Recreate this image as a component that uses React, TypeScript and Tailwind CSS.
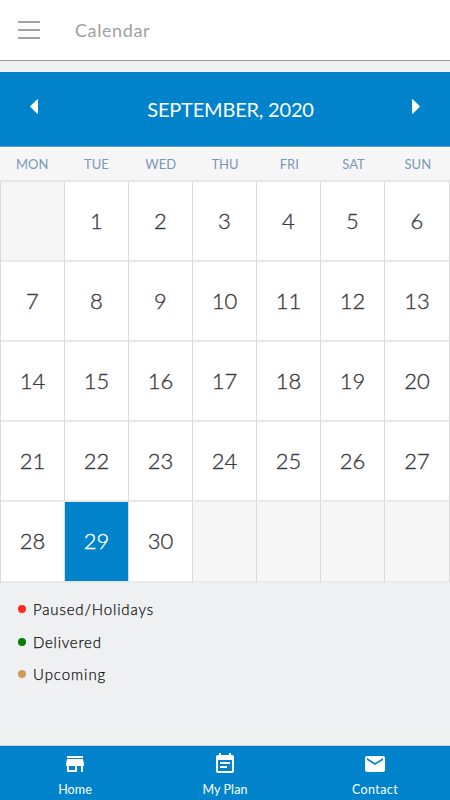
import { MdEmail, MdEventNote, MdStoreMallDirectory } from "react-icons/md";

const weekdays = ["MON", "TUE", "WED", "THU", "FRI", "SAT", "SUN"];

const weeks = [
  [0, 1, 2, 3, 4, 5, 6],
  [7, 8, 9, 10, 11, 12, 13],
  [14, 15, 16, 17, 18, 19, 20],
  [21, 22, 23, 24, 25, 26, 27],
  [28, 29, 30, 0, 0, 0, 0],
];

const legend = [
  { label: "Paused/Holidays", dot: "bg-[#fb2b22]", text: "tracking-[0.85px]" },
  { label: "Delivered", dot: "bg-[#038003]", text: "tracking-[0.75px]" },
  { label: "Upcoming", dot: "bg-[#cf9b55]", text: "tracking-[0.95px]" },
];

const tabs = [
  { label: "Home", icon: MdStoreMallDirectory, text: "tracking-[0.1px]" },
  { label: "My Plan", icon: MdEventNote, text: "tracking-[0.1px]" },
  { label: "Contact", icon: MdEmail, text: "tracking-[0.4px]" },
];

const selected = 29;

function dayClass(day: number) {
  if (day === selected) return "bg-[#0083cb] text-white";
  if (day === 0) return "bg-[#f6f6f6]";
  return "bg-white text-[#3a3d42]";
}

export default function App() {
  return (
    <div className="flex h-[800px] w-[450px] flex-col overflow-hidden bg-[#eff0f2] font-['Lato',sans-serif]">
      {/* Top bar */}
      <header className="flex h-[61px] shrink-0 items-center border-b border-[#999] bg-white pl-[18px]">
        <button aria-label="Menu" className="flex w-[22px] flex-col gap-[6px]">
          <span className="h-[2px] w-full bg-[#a3a3a3]" />
          <span className="h-[2px] w-full bg-[#a3a3a3]" />
          <span className="h-[2px] w-full bg-[#a3a3a3]" />
        </button>
        <h1 className="ml-[35px] text-[18px] leading-6 tracking-[0.6px] text-[#a0a0a0]">
          Calendar
        </h1>
      </header>

      {/* Month switcher */}
      <div className="mt-[11px] flex h-[75px] shrink-0 items-center justify-between border-b border-[#5b9bd0] bg-[#0083cb] px-[30px] text-white">
        <button aria-label="Previous month" className="-mt-1.5">
          <svg width="8" height="15" viewBox="0 0 8 15" fill="currentColor">
            <path d="M7 0.4 Q8 0 8 1 V14 Q8 15 7 14.4 L0.4 8.1 Q0 7.5 0.4 6.9 Z" />
          </svg>
        </button>
        <h2 className="pl-[11px] text-[20px] leading-6 tracking-[-0.2px]">
          SEPTEMBER, 2020
        </h2>
        <button aria-label="Next month" className="-mt-1.5">
          <svg width="8" height="15" viewBox="0 0 8 15" fill="currentColor">
            <path d="M1 0.4 Q0 0 0 1 V14 Q0 15 1 14.4 L7.6 8.1 Q8 7.5 7.6 6.9 Z" />
          </svg>
        </button>
      </div>

      {/* Weekday names */}
      <div className="grid h-[35px] shrink-0 grid-cols-7 items-center border-t border-b-2 border-t-white border-b-[#e6e6e6] bg-[#f6f6f6] pt-px text-center text-[13px] text-[#7898b8]">
        {weekdays.map((name) => (
          <span key={name}>{name}</span>
        ))}
      </div>

      {/* Days */}
      <div className="shrink-0 border-l border-[#dadada]">
        {weeks.map((week, i) => (
          <div
            key={i}
            className="grid h-20 grid-cols-[repeat(6,64px)_1fr] last:h-[81px]"
          >
            {week.map((day, j) => (
              <div
                key={j}
                aria-selected={day === selected}
                className={`flex items-center justify-center border-r border-b-2 border-r-[#dadada] border-b-[#e9e9e9] pb-[2px] text-[22px] font-light [-webkit-text-stroke:0.35px] ${dayClass(day)}`}
              >
                {day > 0 && day}
              </div>
            ))}
          </div>
        ))}
      </div>

      {/* Legend */}
      <ul className="mt-[10px] pl-[18px]">
        {legend.map((item) => (
          <li key={item.label} className="flex h-[32.5px] items-center">
            <span className={`size-[8px] rounded-full ${item.dot}`} />
            <span
              className={`ml-[7px] text-[15px] font-light text-[#111] [-webkit-text-stroke:0.25px] ${item.text}`}
            >
              {item.label}
            </span>
          </li>
        ))}
      </ul>

      {/* Bottom tabs */}
      <nav className="mt-auto grid h-[55px] shrink-0 grid-cols-3 border-t border-[#ccd3d9] bg-[#0083cb] text-white">
        {tabs.map(({ label, icon: Icon, text }) => (
          <a key={label} className="flex flex-col items-center pt-[6px]">
            <Icon size={24} />
            <span className={`mt-[6px] text-[12.5px] leading-4 ${text}`}>
              {label}
            </span>
          </a>
        ))}
      </nav>
    </div>
  );
}
